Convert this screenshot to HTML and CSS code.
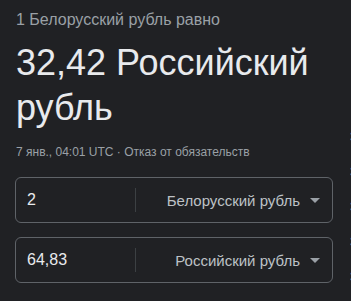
FILE: index.html
```html
<!DOCTYPE html>
<html lang="ru">
<head>
  <meta charset="UTF-8">
  <meta name="viewport" content="width=device-width, initial-scale=1.0">
  <title>Конвертер валют</title>
  <link rel="stylesheet" href="styles.css">
</head>
<body>

<div class="page">
  <div class="converter">
    <div class="subtitle">1 Белорусский рубль равно</div>
    <div class="result">32,42 Российский рубль</div>
    <div class="meta">7 янв., 04:01 UTC · <span class="link">Отказ от обязательств</span></div>

    <div class="field">
      <div class="amount">2</div>
      <div class="divider"></div>
      <div class="currency">Белорусский рубль</div>
      <div class="arrow"></div>
    </div>

    <div class="field">
      <div class="amount">64,83</div>
      <div class="divider"></div>
      <div class="currency">Российский рубль</div>
      <div class="arrow"></div>
    </div>
  </div>

  <div class="axis">
    <span>34</span>
    <span>33</span>
    <span>32</span>
    <span>31</span>
    <span>30</span>
  </div>
</div>

</body>
</html>
```

FILE: styles.css
```css
body {
  margin: 0;
  padding: 0;
  background-color: #202124;
  font-family: Arial, "Liberation Sans", sans-serif;
  overflow: hidden;
}
.page {
  display: flex;
  height: 301px;
}
.converter {
  flex: 0 0 318px;
  padding: 10px 0 0 15px;
}
.subtitle {
  font-size: 16px;
  line-height: 20px;
  color: #9aa0a6;
  padding-left: 1px;
}
.result {
  font-size: 36px;
  line-height: 45px;
  color: #e8eaed;
  padding: 10px 0 0 1px;
}
.meta {
  font-size: 12px;
  line-height: 16px;
  color: #9aa0a6;
  padding: 14px 0 0 1px;
}
.link {
  color: #9aa0a6;
}
.field {
  display: flex;
  align-items: center;
  height: 44px;
  border: 1px solid #5f6368;
  border-radius: 6px;
  margin-top: 14px;
}
.meta + .field {
  margin-top: 17px;
}
.amount {
  flex: 0 0 108px;
  padding-left: 11px;
  font-size: 16px;
  color: #e8eaed;
}
.divider {
  width: 1px;
  height: 24px;
  background-color: #3c4043;
}
.currency {
  flex: 1;
  text-align: right;
  font-size: 15px;
  color: #bdc1c6;
}
.arrow {
  width: 0;
  height: 0;
  margin: 0 12px 0 10px;
  border-left: 5px solid transparent;
  border-right: 5px solid transparent;
  border-top: 5px solid #9aa0a6;
}
.axis {
  display: flex;
  flex-direction: column;
  padding: 120px 0 0 17px;
  font-size: 12px;
  line-height: 35px;
  color: #9aa0a6;
}
```
